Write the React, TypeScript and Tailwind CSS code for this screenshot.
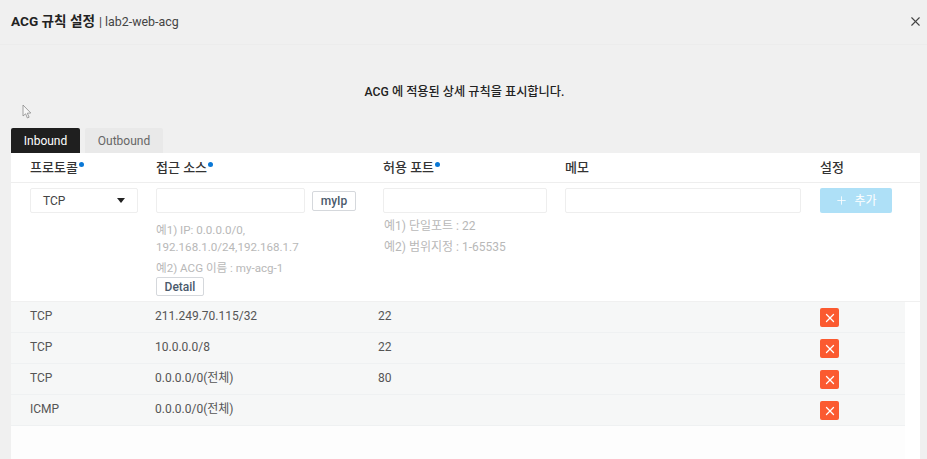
import { type FC } from 'react';
import { X, Plus } from 'lucide-react';

const font = "font-['Roboto','Noto_Sans_CJK_KR',sans-serif]";

const rules = [
  { protocol: 'TCP', source: '211.249.70.115/32', port: '22' },
  { protocol: 'TCP', source: '10.0.0.0/8', port: '22' },
  { protocol: 'TCP', source: '0.0.0.0/0(전체)', port: '80' },
  { protocol: 'ICMP', source: '0.0.0.0/0(전체)', port: '' },
];

const Head: FC<{ label: string; required?: boolean; className: string }> = ({ label, required, className }) => (
  <div className={`${className} flex items-start text-[13px] font-medium text-[#333]`}>
    <span className="leading-[29px]">{label}</span>
    {required && <span className="mt-[9px] ml-[1px] h-[5px] w-[5px] rounded-full bg-[#0a78d6]" />}
  </div>
);

const Field: FC<{ className: string }> = ({ className }) => (
  <div className={`${className} h-[25px] rounded-[2px] border border-[#eeeeee] bg-white`} />
);

export default function App() {
  return (
    <div className={`${font} flex h-[459px] w-[927px] flex-col overflow-hidden bg-[#f0f0f0]`}>
      <header className="flex h-[45px] shrink-0 items-center justify-between border-b border-[#ececec] pr-[4px] pl-[11px] pb-[2px]">
        <div className="flex items-baseline text-[12.4px] text-[#444]">
          <span className="text-[13.6px] font-bold text-[#222]">ACG 규칙 설정</span>
          <span className="ml-[4px]">| lab2-web-acg</span>
        </div>
        <X size={15} strokeWidth={1.8} className="text-[#444]" />
      </header>

      <p className="mt-[38px] ml-[2px] text-center text-[12.2px] leading-[18px] font-medium text-[#222]">
        ACG 에 적용된 상세 규칙을 표시합니다.
      </p>

      <div className="relative mt-[27px] ml-[11px] flex h-[25px] gap-[5px] text-[12px]">
        <svg className="absolute top-[-24px] left-[11px]" width="11" height="15" viewBox="0 0 11 15">
          <path d="M1 1v11l2.6-2.2L5.4 14l1.7-.8-1.8-4 3.5-.2z" fill="#f7f7f7" stroke="#8a8a8a" strokeWidth="0.8" />
        </svg>
        <div className="flex w-[69px] items-center justify-center rounded-t-[2px] bg-[#1f1f1f] text-white">Inbound</div>
        <div className="flex w-[78px] items-center justify-center rounded-t-[2px] bg-[#e9e9e9] text-[#666]">Outbound</div>
      </div>

      <main className="ml-[11px] flex w-[909px] flex-1 flex-col bg-white">
        <div className="flex h-[30px] shrink-0 border-b border-[#eeeeee] pl-[19px]">
          <Head label="프로토콜" required className="w-[126px]" />
          <Head label="접근 소스" required className="w-[227px]" />
          <Head label="허용 포트" required className="w-[182px]" />
          <Head label="메모" className="w-[255px]" />
          <Head label="설정" className="w-[60px]" />
        </div>

        <div className="flex h-[119px] shrink-0 border-b border-[#f0f0f0] pt-[5px] pl-[19px]">
          <div className="w-[126px]">
            <div className="flex h-[25px] w-[108px] items-center justify-between rounded-[2px] border border-[#eeeeee] pr-[12px] pl-[12px] text-[12px] text-[#444]">
              TCP
              <span className="h-0 w-0 border-x-[4px] border-t-[5px] border-x-transparent border-t-[#222]" />
            </div>
          </div>

          <div className="w-[227px]">
            <div className="flex items-center gap-[7px]">
              <Field className="w-[149px]" />
              <button className="h-[20px] w-[44px] rounded-[2px] border border-[#d5d8dc] text-[12px] font-medium text-[#4a5a6c]">myIp</button>
            </div>
            <div className="mt-[9px] text-[11.6px] leading-[17px] text-[#b8b8b8]">
              <p>예1) IP: 0.0.0.0/0,</p>
              <p>192.168.1.0/24,192.168.1.7</p>
              <p className="mt-[4px]">예2) ACG 이름 : my-acg-1</p>
            </div>
            <button className="block h-[19px] w-[48px] rounded-[2px] border border-[#d5d8dc] text-[12px] font-medium text-[#4a5a6c]">Detail</button>
          </div>

          <div className="w-[182px]">
            <Field className="w-[164px]" />
            <div className="mt-[3px] ml-[1px] text-[12px] text-[#b8b8b8]">
              <p className="leading-[21px]">예1) 단일포트 : 22</p>
              <p className="leading-[21px]">예2) 범위지정 : 1-65535</p>
            </div>
          </div>

          <div className="w-[255px]">
            <Field className="w-[236px]" />
          </div>

          <div className="flex h-[25px] w-[72px] items-center justify-center gap-[6px] rounded-[2px] bg-[#aee0f7] text-[12px] text-white">
            <Plus size={13} strokeWidth={1.5} />
            추가
          </div>
        </div>

        <div className="flex flex-1 flex-col pr-[15px]">
          <div className="flex-1 bg-[#fdfdfd]">
            {rules.map((rule, i) => (
              <div key={i} className="flex h-[31px] border-b border-[#eff1f2] bg-[#f6f7f7] pl-[19px] text-[12px] text-[#555]">
                <span className="mt-[7px] w-[125px] leading-[14px]">{rule.protocol}</span>
                <span className="mt-[7px] w-[223px] leading-[14px]">{rule.source}</span>
                <span className="mt-[7px] w-[442px] leading-[14px]">{rule.port}</span>
                <span className="mt-[6px] flex h-[19px] w-[19px] items-center justify-center rounded-[2px] bg-[#fb5a30]">
                  <X size={14} strokeWidth={2.2} className="text-white" />
                </span>
              </div>
            ))}
          </div>
        </div>
      </main>
    </div>
  );
}
